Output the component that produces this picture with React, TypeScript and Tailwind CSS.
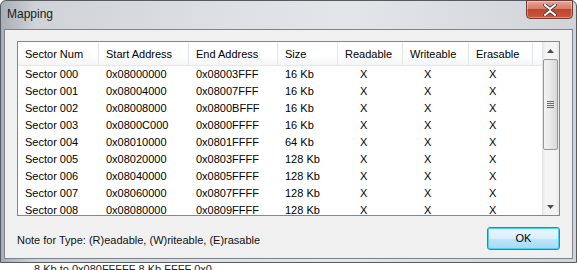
import React from "react";

const rows = [
  ["Sector 000", "0x08000000", "0x08003FFF", "16 Kb"],
  ["Sector 001", "0x08004000", "0x08007FFF", "16 Kb"],
  ["Sector 002", "0x08008000", "0x0800BFFF", "16 Kb"],
  ["Sector 003", "0x0800C000", "0x0800FFFF", "16 Kb"],
  ["Sector 004", "0x08010000", "0x0801FFFF", "64 Kb"],
  ["Sector 005", "0x08020000", "0x0803FFFF", "128 Kb"],
  ["Sector 006", "0x08040000", "0x0805FFFF", "128 Kb"],
  ["Sector 007", "0x08060000", "0x0807FFFF", "128 Kb"],
  ["Sector 008", "0x08080000", "0x0809FFFF", "128 Kb"],
  ["Sector 009", "0x080A0000", "0x080BFFFF", "128 Kb"],
];

const headers = ["Sector Num", "Start Address", "End Address", "Size", "Readable", "Writeable", "Erasable"];
const widths = ["w-[81px]", "w-[90px]", "w-[89px]", "w-[60px]", "w-[65px]", "w-[66px]", "w-[64px]"];

function CloseGlyph() {
  return (
    <svg width="14" height="12" viewBox="0 0 14 12">
      <path d="M2 1 L7 5 L12 1 M2 11 L7 7 L12 11" stroke="#3a3a3a" strokeWidth="3.6" fill="none" strokeLinecap="square" />
      <path d="M2 1 L7 5 L12 1 M2 11 L7 7 L12 11" stroke="#ffffff" strokeWidth="2" fill="none" strokeLinecap="square" />
    </svg>
  );
}

function Arrow({ up }: { up?: boolean }) {
  return (
    <svg width="7" height="4" viewBox="0 0 7 4">
      {up ? <path d="M0 4 L3.5 0 L7 4 Z" fill="#4d4d4d" /> : <path d="M0 0 L3.5 4 L7 0 Z" fill="#4d4d4d" />}
    </svg>
  );
}

export default function App() {
  return (
    <div className="w-[577px] h-[270px] bg-white overflow-hidden relative font-['Liberation_Sans',Arial,sans-serif] text-[11px] text-black">
      <div className="absolute left-[34px] top-[263px] leading-[13px] text-[11px] text-[#222] whitespace-nowrap">
        8 Kb to 0x080FFFFF 8 Kb FFFF 0x0
      </div>
      <div className="relative h-[263px] flex flex-col rounded-t-[6px] border border-[#555b62] bg-[linear-gradient(to_right,#a9aeb4_0%,#cfd3d8_6%,#dde0e4_40%,#e3e6e9_60%,#d0d4d9_100%)]">
        {/* title bar */}
        <div className="h-[28px] flex items-start relative shrink-0">
          <span className="ml-[6px] mt-[5px] text-[12px] leading-[16px] text-[#1c1c1c]">Mapping</span>
          <div className="absolute right-[3px] top-[-1px] w-[47px] h-[19px] rounded-b-[4px] border border-[#6e3c35] bg-[linear-gradient(to_bottom,#e8a597_0%,#d77d6a_45%,#c2442c_50%,#c9583f_100%)] flex items-center justify-center shadow-[inset_0_0_0_1px_rgba(255,255,255,0.35)]">
            <CloseGlyph />
          </div>
        </div>
        {/* client */}
        <div className="mx-[3px] mb-[3px] flex-1 border border-[#7d848c] bg-[#f0f0f0] flex flex-col px-[12px] pt-[11px]">
          <div className="h-[175px] border border-[#828790] bg-white flex">
            <div className="flex-1 flex flex-col overflow-hidden">
              <div className="h-[24px] flex shrink-0 bg-[linear-gradient(to_bottom,#ffffff_0%,#ffffff_60%,#f4f5f7_100%)] border-b border-[#e5e7ea]">
                {headers.map((h, i) => (
                  <div key={h} className={`${widths[i]} shrink-0 pl-[7px] pt-[1px] flex items-center border-r border-[#e3e6ea] whitespace-nowrap`}>
                    {h}
                  </div>
                ))}
                <div className="flex-1" />
              </div>
              <div className="flex flex-col">
                {rows.map((r) => (
                  <div key={r[0]} className="h-[17px] flex items-center shrink-0 whitespace-nowrap">
                    <div className="w-[81px] shrink-0 pl-[7px]">{r[0]}</div>
                    <div className="w-[90px] shrink-0 pl-[7px]">{r[1]}</div>
                    <div className="w-[89px] shrink-0 pl-[7px]">{r[2]}</div>
                    <div className="w-[60px] shrink-0 pl-[7px]">{r[3]}</div>
                    <div className="w-[65px] shrink-0 pl-[22px]">X</div>
                    <div className="w-[66px] shrink-0 pl-[21px]">X</div>
                    <div className="w-[64px] shrink-0 pl-[20px]">X</div>
                  </div>
                ))}
              </div>
            </div>
            {/* scrollbar */}
            <div className="w-[17px] shrink-0 flex flex-col bg-[linear-gradient(to_right,#e3e3e3,#f4f4f4_20%,#f4f4f4_80%,#e8e8e8)]">
              <div className="h-[17px] flex items-center justify-center shrink-0">
                <Arrow up />
              </div>
              <div className="h-[91px] mx-[1px] rounded-[2px] border border-[#979797] bg-[linear-gradient(to_right,#f3f3f3,#e8e8e8_50%,#d6d6d6)] flex items-center justify-center shrink-0">
                <div className="flex flex-col gap-[1px]">
                  <div className="w-[7px] h-[1px] bg-[#6b6b6b]" />
                  <div className="w-[7px] h-[1px] bg-[#6b6b6b]" />
                  <div className="w-[7px] h-[1px] bg-[#6b6b6b]" />
                  <div className="w-[7px] h-[1px] bg-[#6b6b6b]" />
                </div>
              </div>
              <div className="flex-1" />
              <div className="h-[17px] flex items-center justify-center shrink-0">
                <Arrow />
              </div>
            </div>
          </div>
          <div className="flex items-center justify-between mt-[11px]">
            <span className="mt-[3px] text-[#111]">Note for Type: (R)eadable, (W)riteable, (E)rasable</span>
            <button className="w-[73px] h-[23px] rounded-[3px] border border-[#3c7fb1] bg-[linear-gradient(to_bottom,#eaf6fd_0%,#d9f0fc_50%,#bee6fd_51%,#a7d9f5_100%)] shadow-[inset_0_0_0_1px_#48d2f8] text-[11px] text-black">
              OK
            </button>
          </div>
        </div>
      </div>
    </div>
  );
}
